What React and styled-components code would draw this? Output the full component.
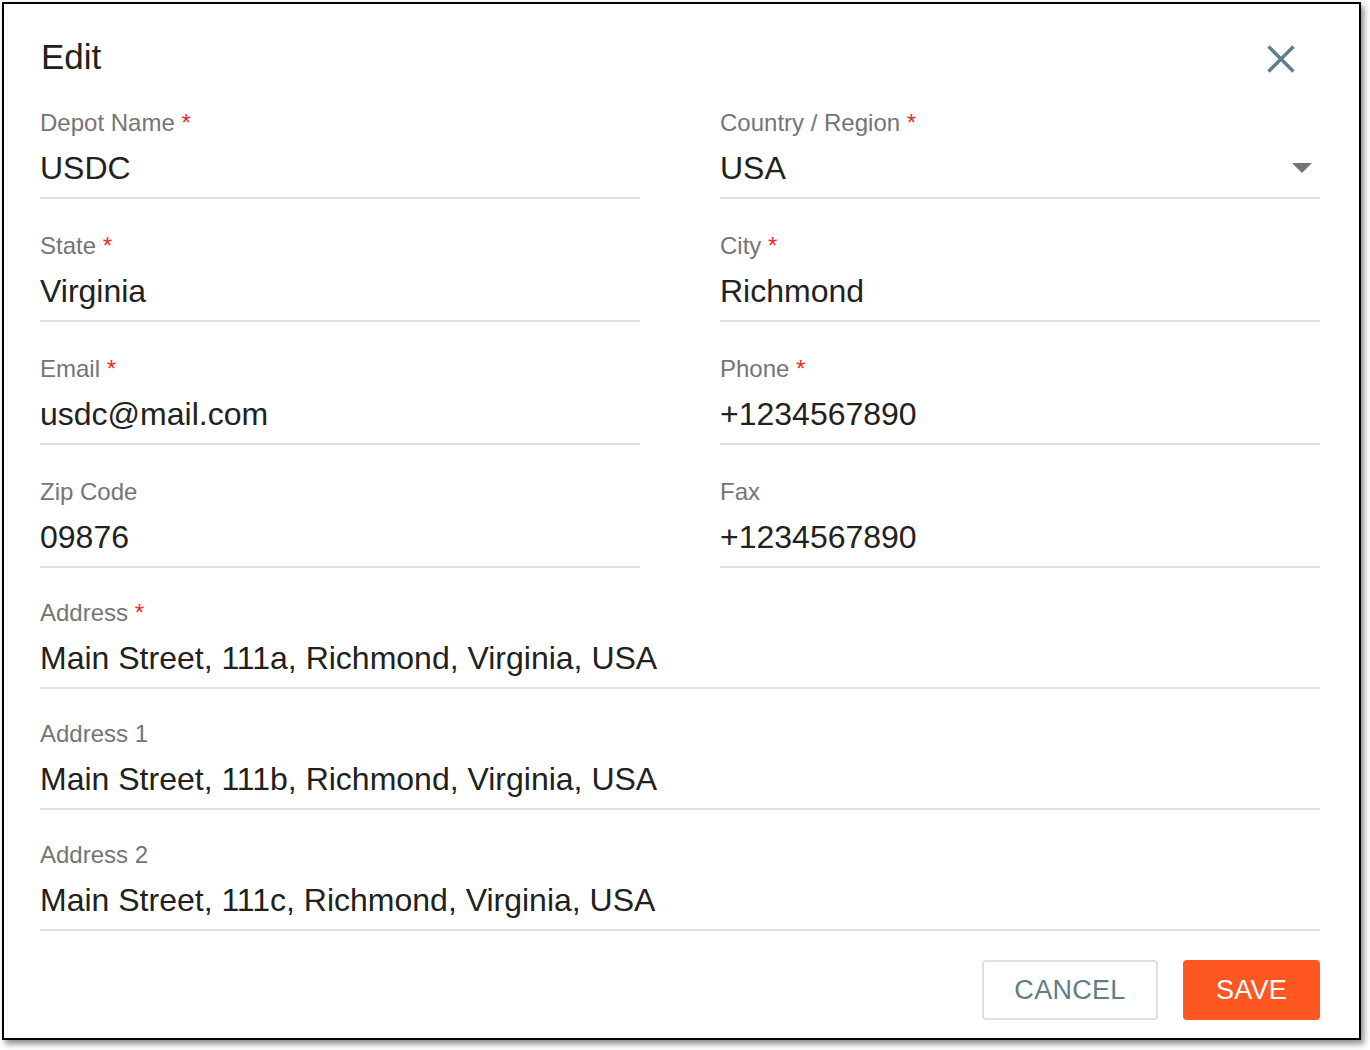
import React from "react";
import styled, { createGlobalStyle } from "styled-components";

const GlobalStyle = createGlobalStyle`
  html, body {
    margin: 0;
    padding: 0;
    background: #ffffff;
    font-family: "Liberation Sans", Arial, Helvetica, sans-serif;
  }
`;

const Page = styled.div`
  padding: 2px;
  width: 1370px;
  height: 1050px;
  box-sizing: border-box;
`;

const Dialog = styled.div`
  width: 1359px;
  height: 1038px;
  box-sizing: border-box;
  border: 2px solid #000;
  background: #fff;
  box-shadow: 3px 4px 6px rgba(0, 0, 0, 0.45);
  padding: 0 39px 0 36px;
  display: flex;
  flex-direction: column;
`;

const Header = styled.div`
  height: 105px;
  display: flex;
  align-items: center;
  justify-content: space-between;
`;

const Title = styled.h2`
  margin: 0;
  font-size: 35px;
  line-height: 40px;
  font-weight: 400;
  color: #212121;
  padding-left: 1px;
`;

const CloseButton = styled.button`
  border: 0;
  background: none;
  padding: 0;
  margin: 5px 25px 0 0;
  width: 28px;
  height: 28px;
  display: flex;
  cursor: pointer;
`;

const Grid = styled.div`
  display: grid;
  grid-template-columns: 600px 600px;
  column-gap: 80px;
  row-gap: 33px;
`;

const Stack = styled.div`
  display: flex;
  flex-direction: column;
  gap: 31px;
  margin-top: 31px;
`;

const Field = styled.div`
  display: flex;
  flex-direction: column;
`;

const Label = styled.label`
  font-size: 24px;
  line-height: 28px;
  color: #757575;
`;

const Required = styled.span`
  color: #f02b2b;
`;

const ValueRow = styled.div`
  margin-top: 11px;
  height: 40px;
  padding-bottom: 9px;
  border-bottom: 2px solid #e0e0e0;
  display: flex;
  align-items: center;
  justify-content: space-between;
`;

const Value = styled.span`
  font-size: 32px;
  line-height: 40px;
  color: #212121;
`;

const Caret = styled.span`
  width: 0;
  height: 0;
  margin-right: 8px;
  border-left: 10px solid transparent;
  border-right: 10px solid transparent;
  border-top: 10px solid #757575;
`;

const Footer = styled.div`
  margin-top: 29px;
  display: flex;
  justify-content: flex-end;
  gap: 25px;
`;

const Button = styled.button`
  height: 60px;
  width: ${(p) => (p.primary ? "137px" : "176px")};
  box-sizing: border-box;
  border-radius: 4px;
  border: 2px solid ${(p) => (p.primary ? "#ff5722" : "#e0e0e0")};
  background: ${(p) => (p.primary ? "#ff5722" : "#fff")};
  color: ${(p) => (p.primary ? "#fff" : "#607d8b")};
  font-family: "Liberation Sans", Arial, sans-serif;
  font-size: 27px;
  letter-spacing: 0.3px;
  cursor: pointer;
`;

function FormField({ label, value, required, select }) {
  return (
    <Field>
      <Label>
        {label}
        {required && <Required> *</Required>}
      </Label>
      <ValueRow>
        <Value>{value}</Value>
        {select && <Caret />}
      </ValueRow>
    </Field>
  );
}

const gridFields = [
  { label: "Depot Name", value: "USDC", required: true },
  { label: "Country / Region", value: "USA", required: true, select: true },
  { label: "State", value: "Virginia", required: true },
  { label: "City", value: "Richmond", required: true },
  { label: "Email", value: "usdc@mail.com", required: true },
  { label: "Phone", value: "+1234567890", required: true },
  { label: "Zip Code", value: "09876" },
  { label: "Fax", value: "+1234567890" },
];

const wideFields = [
  { label: "Address", value: "Main Street, 111a, Richmond, Virginia, USA", required: true },
  { label: "Address 1", value: "Main Street, 111b, Richmond, Virginia, USA" },
  { label: "Address 2", value: "Main Street, 111c, Richmond, Virginia, USA" },
];

export default function App() {
  return (
    <Page>
      <GlobalStyle />
      <Dialog>
        <Header>
          <Title>Edit</Title>
          <CloseButton aria-label="close">
            <svg width="28" height="28" viewBox="0 0 28 28">
              <path d="M1.5 1.5 L26.5 26.5 M26.5 1.5 L1.5 26.5" stroke="#5f7e8c" strokeWidth="3.5" fill="none" />
            </svg>
          </CloseButton>
        </Header>
        <Grid>
          {gridFields.map((f) => (
            <FormField key={f.label} {...f} />
          ))}
        </Grid>
        <Stack>
          {wideFields.map((f) => (
            <FormField key={f.label} {...f} />
          ))}
        </Stack>
        <Footer>
          <Button>CANCEL</Button>
          <Button primary>SAVE</Button>
        </Footer>
      </Dialog>
    </Page>
  );
}
